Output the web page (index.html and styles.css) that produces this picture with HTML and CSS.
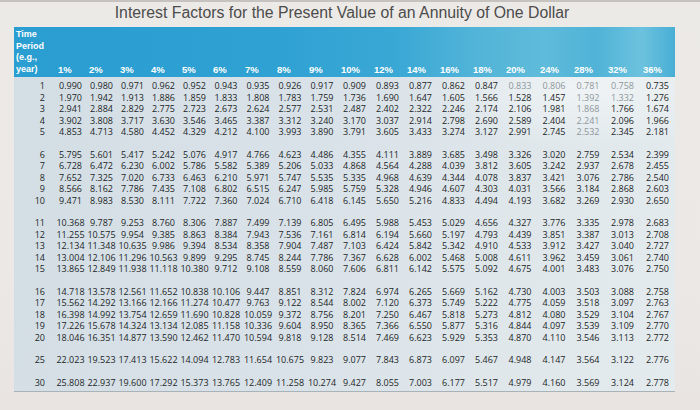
FILE: index.html
```html
<!DOCTYPE html>
<html lang="en">
<head>
<meta charset="utf-8">
<title>Interest Factors for the Present Value of an Annuity of One Dollar</title>
<link rel="stylesheet" href="styles.css">
</head>
<body>
<div class="page">
  <h1 class="title">Interest Factors for the Present Value of an Annuity of One Dollar</h1>
  <div class="panel">
    <div class="head">
      <div class="lab">Time<br>Period<br>(e.g.,<br>year)</div>
      <div class="pc">1%</div><div class="pc">2%</div><div class="pc">3%</div><div class="pc">4%</div><div class="pc">5%</div><div class="pc">6%</div><div class="pc">7%</div><div class="pc">8%</div><div class="pc">9%</div><div class="pc">10%</div><div class="pc">12%</div><div class="pc">14%</div><div class="pc">16%</div><div class="pc">18%</div><div class="pc">20%</div><div class="pc">24%</div><div class="pc">28%</div><div class="pc">32%</div><div class="pc">36%</div>
    </div>
    <div class="body">
      <div class="grp">
        <div class="row"><span class="yr">1</span><span>0.990</span><span>0.980</span><span>0.971</span><span>0.962</span><span>0.952</span><span>0.943</span><span>0.935</span><span>0.926</span><span>0.917</span><span>0.909</span><span>0.893</span><span>0.877</span><span>0.862</span><span>0.847</span><span class="g">0.833</span><span class="g">0.806</span><span class="g">0.781</span><span class="g">0.758</span><span>0.735</span></div>
        <div class="row"><span class="yr">2</span><span>1.970</span><span>1.942</span><span>1.913</span><span>1.886</span><span>1.859</span><span>1.833</span><span>1.808</span><span>1.783</span><span>1.759</span><span>1.736</span><span>1.690</span><span>1.647</span><span>1.605</span><span>1.566</span><span>1.528</span><span>1.457</span><span class="g">1.392</span><span class="g">1.332</span><span>1.276</span></div>
        <div class="row"><span class="yr">3</span><span>2.941</span><span>2.884</span><span>2.829</span><span>2.775</span><span>2.723</span><span>2.673</span><span>2.624</span><span>2.577</span><span>2.531</span><span>2.487</span><span>2.402</span><span>2.322</span><span>2.246</span><span>2.174</span><span>2.106</span><span>1.981</span><span class="g">1.868</span><span>1.766</span><span>1.674</span></div>
        <div class="row"><span class="yr">4</span><span>3.902</span><span>3.808</span><span>3.717</span><span>3.630</span><span>3.546</span><span>3.465</span><span>3.387</span><span>3.312</span><span>3.240</span><span>3.170</span><span>3.037</span><span>2.914</span><span>2.798</span><span>2.690</span><span>2.589</span><span>2.404</span><span class="g">2.241</span><span>2.096</span><span>1.966</span></div>
        <div class="row"><span class="yr">5</span><span>4.853</span><span>4.713</span><span>4.580</span><span>4.452</span><span>4.329</span><span>4.212</span><span>4.100</span><span>3.993</span><span>3.890</span><span>3.791</span><span>3.605</span><span>3.433</span><span>3.274</span><span>3.127</span><span>2.991</span><span>2.745</span><span class="g">2.532</span><span>2.345</span><span>2.181</span></div>
      </div>
      <div class="grp">
        <div class="row"><span class="yr">6</span><span>5.795</span><span>5.601</span><span>5.417</span><span>5.242</span><span>5.076</span><span>4.917</span><span>4.766</span><span>4.623</span><span>4.486</span><span>4.355</span><span>4.111</span><span>3.889</span><span>3.685</span><span>3.498</span><span>3.326</span><span>3.020</span><span>2.759</span><span>2.534</span><span>2.399</span></div>
        <div class="row"><span class="yr">7</span><span>6.728</span><span>6.472</span><span>6.230</span><span>6.002</span><span>5.786</span><span>5.582</span><span>5.389</span><span>5.206</span><span>5.033</span><span>4.868</span><span>4.564</span><span>4.288</span><span>4.039</span><span>3.812</span><span>3.605</span><span>3.242</span><span>2.937</span><span>2.678</span><span>2.455</span></div>
        <div class="row"><span class="yr">8</span><span>7.652</span><span>7.325</span><span>7.020</span><span>6.733</span><span>6.463</span><span>6.210</span><span>5.971</span><span>5.747</span><span>5.535</span><span>5.335</span><span>4.968</span><span>4.639</span><span>4.344</span><span>4.078</span><span>3.837</span><span>3.421</span><span>3.076</span><span>2.786</span><span>2.540</span></div>
        <div class="row"><span class="yr">9</span><span>8.566</span><span>8.162</span><span>7.786</span><span>7.435</span><span>7.108</span><span>6.802</span><span>6.515</span><span>6.247</span><span>5.985</span><span>5.759</span><span>5.328</span><span>4.946</span><span>4.607</span><span>4.303</span><span>4.031</span><span>3.566</span><span>3.184</span><span>2.868</span><span>2.603</span></div>
        <div class="row"><span class="yr">10</span><span>9.471</span><span>8.983</span><span>8.530</span><span>8.111</span><span>7.722</span><span>7.360</span><span>7.024</span><span>6.710</span><span>6.418</span><span>6.145</span><span>5.650</span><span>5.216</span><span>4.833</span><span>4.494</span><span>4.193</span><span>3.682</span><span>3.269</span><span>2.930</span><span>2.650</span></div>
      </div>
      <div class="grp">
        <div class="row"><span class="yr">11</span><span>10.368</span><span>9.787</span><span>9.253</span><span>8.760</span><span>8.306</span><span>7.887</span><span>7.499</span><span>7.139</span><span>6.805</span><span>6.495</span><span>5.988</span><span>5.453</span><span>5.029</span><span>4.656</span><span>4.327</span><span>3.776</span><span>3.335</span><span>2.978</span><span>2.683</span></div>
        <div class="row"><span class="yr">12</span><span>11.255</span><span>10.575</span><span>9.954</span><span>9.385</span><span>8.863</span><span>8.384</span><span>7.943</span><span>7.536</span><span>7.161</span><span>6.814</span><span>6.194</span><span>5.660</span><span>5.197</span><span>4.793</span><span>4.439</span><span>3.851</span><span>3.387</span><span>3.013</span><span>2.708</span></div>
        <div class="row"><span class="yr">13</span><span>12.134</span><span>11.348</span><span>10.635</span><span>9.986</span><span>9.394</span><span>8.534</span><span>8.358</span><span>7.904</span><span>7.487</span><span>7.103</span><span>6.424</span><span>5.842</span><span>5.342</span><span>4.910</span><span>4.533</span><span>3.912</span><span>3.427</span><span>3.040</span><span>2.727</span></div>
        <div class="row"><span class="yr">14</span><span>13.004</span><span>12.106</span><span>11.296</span><span>10.563</span><span>9.899</span><span>9.295</span><span>8.745</span><span>8.244</span><span>7.786</span><span>7.367</span><span>6.628</span><span>6.002</span><span>5.468</span><span>5.008</span><span>4.611</span><span>3.962</span><span>3.459</span><span>3.061</span><span>2.740</span></div>
        <div class="row"><span class="yr">15</span><span>13.865</span><span>12.849</span><span>11.938</span><span>11.118</span><span>10.380</span><span>9.712</span><span>9.108</span><span>8.559</span><span>8.060</span><span>7.606</span><span>6.811</span><span>6.142</span><span>5.575</span><span>5.092</span><span>4.675</span><span>4.001</span><span>3.483</span><span>3.076</span><span>2.750</span></div>
      </div>
      <div class="grp">
        <div class="row"><span class="yr">16</span><span>14.718</span><span>13.578</span><span>12.561</span><span>11.652</span><span>10.838</span><span>10.106</span><span>9.447</span><span>8.851</span><span>8.312</span><span>7.824</span><span>6.974</span><span>6.265</span><span>5.669</span><span>5.162</span><span>4.730</span><span>4.003</span><span>3.503</span><span>3.088</span><span>2.758</span></div>
        <div class="row"><span class="yr">17</span><span>15.562</span><span>14.292</span><span>13.166</span><span>12.166</span><span>11.274</span><span>10.477</span><span>9.763</span><span>9.122</span><span>8.544</span><span>8.002</span><span>7.120</span><span>6.373</span><span>5.749</span><span>5.222</span><span>4.775</span><span>4.059</span><span>3.518</span><span>3.097</span><span>2.763</span></div>
        <div class="row"><span class="yr">18</span><span>16.398</span><span>14.992</span><span>13.754</span><span>12.659</span><span>11.690</span><span>10.828</span><span>10.059</span><span>9.372</span><span>8.756</span><span>8.201</span><span>7.250</span><span>6.467</span><span>5.818</span><span>5.273</span><span>4.812</span><span>4.080</span><span>3.529</span><span>3.104</span><span>2.767</span></div>
        <div class="row"><span class="yr">19</span><span>17.226</span><span>15.678</span><span>14.324</span><span>13.134</span><span>12.085</span><span>11.158</span><span>10.336</span><span>9.604</span><span>8.950</span><span>8.365</span><span>7.366</span><span>6.550</span><span>5.877</span><span>5.316</span><span>4.844</span><span>4.097</span><span>3.539</span><span>3.109</span><span>2.770</span></div>
        <div class="row"><span class="yr">20</span><span>18.046</span><span>16.351</span><span>14.877</span><span>13.590</span><span>12.462</span><span>11.470</span><span>10.594</span><span>9.818</span><span>9.128</span><span>8.514</span><span>7.469</span><span>6.623</span><span>5.929</span><span>5.353</span><span>4.870</span><span>4.110</span><span>3.546</span><span>3.113</span><span>2.772</span></div>
      </div>
      <div class="grp">
        <div class="row"><span class="yr">25</span><span>22.023</span><span>19.523</span><span>17.413</span><span>15.622</span><span>14.094</span><span>12.783</span><span>11.654</span><span>10.675</span><span>9.823</span><span>9.077</span><span>7.843</span><span>6.873</span><span>6.097</span><span>5.467</span><span>4.948</span><span>4.147</span><span>3.564</span><span>3.122</span><span>2.776</span></div>
      </div>
      <div class="grp">
        <div class="row"><span class="yr">30</span><span>25.808</span><span>22.937</span><span>19.600</span><span>17.292</span><span>15.373</span><span>13.765</span><span>12.409</span><span>11.258</span><span>10.274</span><span>9.427</span><span>8.055</span><span>7.003</span><span>6.177</span><span>5.517</span><span>4.979</span><span>4.160</span><span>3.569</span><span>3.124</span><span>2.778</span></div>
      </div>
    </div>
  </div>
</div>
</body>
</html>
```

FILE: styles.css
```css
html, body {
  margin: 0;
  padding: 0;
}

body {
  background: #ebe8e5;
  font-family: "Open Sans", "Liberation Sans", sans-serif;
}

.page {
  --cols: 41px 31px 31px 31px 31px 31px 32px 32px 32px 32px 33px 33px 33px 33px 33px 34px 34px 34px 35px 35px;
  width: 700px;
  height: 408px;
  border-top: 2px solid #c6c2bf;
  background: linear-gradient(180deg, #eceae7 0%, #ebe8e5 70%, #e9e4e1 100%);
  overflow: hidden;
}

.title {
  margin: 0;
  padding: 2px 16px 0 0;
  height: 20px;
  box-sizing: border-box;
  font-family: "Liberation Sans", Arial, sans-serif;
  font-weight: 400;
  font-size: 15.8px;
  line-height: 18px;
  color: #4c4c4c;
  text-align: center;
  white-space: nowrap;
}

.panel {
  margin: 5px 0 0 14px;
  width: 661px;
}

.head {
  display: grid;
  grid-template-columns: var(--cols);
  align-items: end;
  height: 50px;
  background: linear-gradient(90deg, #2a9dd1 0%, #2fa1d3 40%, #3aa8d5 58%, #52b4d8 70%, #5fbbda 80%, #50b3d7 88%, #6cc2de 95%, #48aed5 100%);
  color: #ffffff;
  font-family: "Liberation Sans", Arial, sans-serif;
  font-weight: 700;
  font-size: 9.5px;
  line-height: 11.5px;
}

.head .lab {
  align-self: start;
  padding: 2px 0 0 2px;
  font-size: 9px;
}

.head .pc {
  padding: 0 0 2px 3px;
}

.body {
  padding: 3px 0;
  background:
    radial-gradient(ellipse 160px 60px at 86% 4%, rgba(255, 255, 255, 0.5), rgba(255, 255, 255, 0) 100%),
    linear-gradient(100deg, #d3dee4 0%, #d9e2e8 45%, #dfe7eb 75%, #e4ebee 100%);
  border-bottom: 1px solid #a9b3b7;
}

.grp + .grp {
  margin-top: 11px;
}

.row {
  display: grid;
  grid-template-columns: var(--cols);
  height: 11.5px;
  font-size: 9px;
  line-height: 11.5px;
  color: #232628;
  text-align: center;
  white-space: nowrap;
}

.row .yr {
  text-align: right;
  padding-right: 10px;
}

.row .g {
  color: #8e979c;
}
```
